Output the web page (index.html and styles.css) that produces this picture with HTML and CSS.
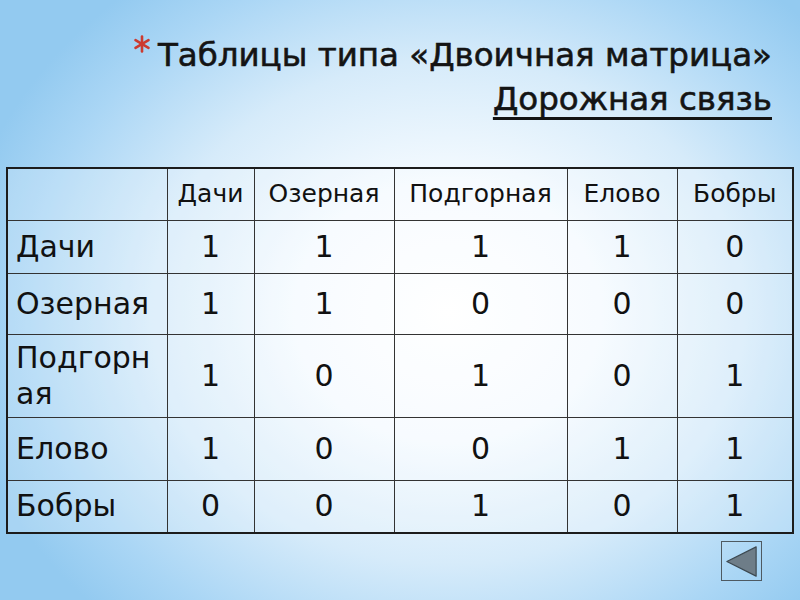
FILE: index.html
```html
<!DOCTYPE html>
<html lang="ru">
<head>
<meta charset="utf-8">
<title>Таблицы типа «Двоичная матрица»</title>
<link rel="stylesheet" href="styles.css">
</head>
<body>
<div class="slide">
  <div class="title">
    <p class="t1"><svg class="bullet" width="20" height="18" viewBox="0 0 20 18"><g stroke="#cc3a2f" stroke-width="2.6" stroke-linecap="round"><line x1="10" y1="1.5" x2="10" y2="16.5"/><line x1="3.5" y1="5.2" x2="16.5" y2="12.8"/><line x1="3.5" y1="12.8" x2="16.5" y2="5.2"/></g></svg><span>Таблицы типа «Двоичная матрица»</span></p>
    <p class="t2"><span class="u">Дорожная связь</span></p>
  </div>
  <table class="matrix">
    <colgroup>
      <col class="c0"><col class="c1"><col class="c2"><col class="c3"><col class="c4"><col class="c5">
    </colgroup>
    <tr class="head r0">
      <td></td><td>Дачи</td><td>Озерная</td><td>Подгорная</td><td>Елово</td><td>Бобры</td>
    </tr>
    <tr class="r1">
      <td class="lbl">Дачи</td><td>1</td><td>1</td><td>1</td><td>1</td><td>0</td>
    </tr>
    <tr class="r2">
      <td class="lbl">Озерная</td><td>1</td><td>1</td><td>0</td><td>0</td><td>0</td>
    </tr>
    <tr class="r3">
      <td class="lbl">Подгорная</td><td>1</td><td>0</td><td>1</td><td>0</td><td>1</td>
    </tr>
    <tr class="r4">
      <td class="lbl">Елово</td><td>1</td><td>0</td><td>0</td><td>1</td><td>1</td>
    </tr>
    <tr class="r5">
      <td class="lbl">Бобры</td><td>0</td><td>0</td><td>1</td><td>0</td><td>1</td>
    </tr>
  </table>
  <div class="nav">
    <button class="back" aria-label="Назад"><svg width="40" height="39" viewBox="0 0 40 39"><polygon points="5,19.5 35,4.5 35,34.5" fill="#6e7d88" stroke="#3c4850" stroke-width="1.2" stroke-linejoin="round"/></svg></button>
  </div>
</div>
</body>
</html>
```
FILE: styles.css
```css
html, body {
  margin: 0;
  padding: 0;
}
body {
  width: 800px;
  height: 600px;
  overflow: hidden;
}
.slide {
  width: 800px;
  height: 600px;
  display: flex;
  flex-direction: column;
  background: radial-gradient(ellipse 62% 70% at 56% 52%, #ffffff 0%, #f6fbff 30%, #d6ebfa 60%, #aad6f5 85%, #93caf0 100%);
  font-family: "DejaVu Sans", Verdana, sans-serif;
  color: #111;
}
.title {
  margin-top: 33px;
  padding-right: 28px;
  font-family: "DejaVu Sans", Tahoma, sans-serif;
  font-size: 32.5px;
  line-height: 44px;
  color: #141414;
  -webkit-text-stroke: 0.6px #141414;
}
.title p {
  margin: 0;
  display: flex;
  justify-content: flex-end;
  align-items: flex-start;
}
.bullet {
  margin-top: 2px;
  margin-right: 6px;
  flex: none;
}
.u {
  text-decoration: underline;
  text-underline-offset: 7px;
  text-decoration-thickness: 3px;
  text-decoration-skip-ink: none;
}
.matrix {
  margin-top: 46px;
  margin-left: 6px;
  width: 786px;
  table-layout: fixed;
  border-collapse: collapse;
  border: 2px solid #1c1c1c;
  font-size: 30px;
  line-height: 36px;
  background: rgba(255, 255, 255, 0.2);
}
.c0 { width: 160px; }
.c1 { width: 87px; }
.c2 { width: 140px; }
.c3 { width: 173px; }
.c4 { width: 110px; }
.c5 { width: 116px; }
.matrix td {
  border: 1px solid #333;
  padding: 0 6px;
  text-align: center;
  vertical-align: middle;
}
.matrix td.lbl {
  text-align: left;
  padding-left: 8px;
  word-break: break-all;
}
.head td {
  font-size: 25px;
  padding: 0;
}
.r0 { height: 52px; }
.r1 { height: 53px; }
.r2 { height: 61px; }
.r3 { height: 83px; }
.r4 { height: 63px; }
.r5 { height: 53px; }
.nav {
  display: flex;
  justify-content: flex-end;
  padding-right: 38px;
  margin-top: 7px;
}
.back {
  width: 41px;
  height: 40px;
  padding: 0;
  margin: 0;
  border: 1px solid #4e5a62;
  background: transparent;
  display: flex;
  align-items: center;
  justify-content: center;
}
.back svg {
  display: block;
}
```
